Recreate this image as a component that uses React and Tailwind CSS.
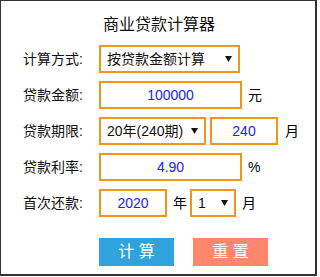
const font = { fontFamily: '"Liberation Sans", "Noto Sans CJK SC", sans-serif' };

function Caret() {
  return (
    <svg width="7" height="6" viewBox="0 0 7 6" className="shrink-0">
      <path d="M0 0h7L3.5 6z" fill="#111" />
    </svg>
  );
}

function SelectBox({ value, width }) {
  return (
    <div className={`${width} h-[28px] border-2 border-[#f0951c] flex items-center justify-between pl-[6px] pr-[6px] text-[14px] text-[#111]`}>
      <span>{value}</span>
      <Caret />
    </div>
  );
}

function InputBox({ value, width }) {
  return (
    <div className={`${width} h-[28px] border-2 border-[#f0951c] flex items-center justify-center text-[14px] text-[#2020ff]`}>
      {value}
    </div>
  );
}

function Row({ label, children }) {
  return (
    <div className="flex items-center h-[28px]">
      <span className="w-[76px] text-[14px] text-[#111] shrink-0">{label}</span>
      {children}
    </div>
  );
}

export default function App() {
  return (
    <div style={font} className="w-[317px] h-[276px] bg-white border-t border-l border-r-2 border-b-2 border-[#333]">
      <h1 className="text-center text-[16px] leading-[20px] text-[#111] pt-[14px] pl-[2px]">商业贷款计算器</h1>

      <div className="flex flex-col gap-[8px] pl-[22px] mt-[10px]">
        <Row label="计算方式:">
          <SelectBox value="按贷款金额计算" width="w-[141px]" />
        </Row>
        <Row label="贷款金额:">
          <InputBox value="100000" width="w-[143px]" />
          <span className="ml-[6px] text-[14px]">元</span>
        </Row>
        <Row label="贷款期限:">
          <SelectBox value="20年(240期)" width="w-[107px]" />
          <InputBox value="240" width="w-[68px] ml-[4px]" />
          <span className="ml-[7px] text-[14px]">月</span>
        </Row>
        <Row label="贷款利率:">
          <InputBox value="4.90" width="w-[143px]" />
          <span className="ml-[6px] text-[14px]">%</span>
        </Row>
        <Row label="首次还款:">
          <InputBox value="2020" width="w-[68px]" />
          <span className="ml-[6px] text-[14px]">年</span>
          <div className="ml-[3px]">
            <SelectBox value="1" width="w-[46px]" />
          </div>
          <span className="ml-[6px] text-[14px]">月</span>
        </Row>
      </div>

      <div className="flex gap-[19px] pl-[98px] mt-[21px]">
        <button className="w-[75px] h-[28px] bg-[#2fa3de] text-white text-[16px]">计 算</button>
        <button className="w-[75px] h-[28px] bg-[#ff876b] text-white text-[16px]">重 置</button>
      </div>
    </div>
  );
}
